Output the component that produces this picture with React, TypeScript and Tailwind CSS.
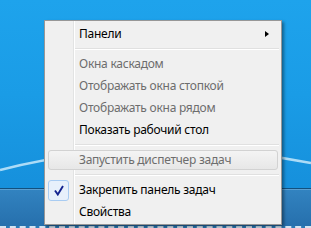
import React from "react";

type Item =
  | { kind: "item"; label: string; disabled?: boolean; hot?: boolean; checked?: boolean; submenu?: boolean }
  | { kind: "sep" };

const ITEMS: Item[] = [
  { kind: "item", label: "Панели", submenu: true },
  { kind: "sep" },
  { kind: "item", label: "Окна каскадом", disabled: true },
  { kind: "item", label: "Отображать окна стопкой", disabled: true },
  { kind: "item", label: "Отображать окна рядом", disabled: true },
  { kind: "item", label: "Показать рабочий стол" },
  { kind: "sep" },
  { kind: "item", label: "Запустить диспетчер задач", disabled: true, hot: true },
  { kind: "sep" },
  { kind: "item", label: "Закрепить панель задач", checked: true },
  { kind: "item", label: "Свойства" },
];

function Check() {
  return (
    <svg width="10" height="11" viewBox="0 0 10 11" className="block">
      <path d="M1 5.5 L3.8 9.5 L9 1" fill="none" stroke="#14238f" strokeWidth="1.9" strokeLinejoin="miter" />
    </svg>
  );
}

function MenuRow({ item }: { item: Item }) {
  if (item.kind === "sep") {
    return (
      <div className="flex h-[8px] items-center pl-[30px] pr-[2px]">
        <div className="w-full border-t border-b border-t-[#e0e0e0] border-b-white" />
      </div>
    );
  }
  return (
    <div className="relative flex h-[22px] items-center">
      {item.hot && (
        <div className="absolute inset-y-[1px] left-[3px] right-[3px] rounded-[3px] border border-[#d2d2d2] bg-gradient-to-b from-[#f4f4f4] to-[#e7e7e7]" />
      )}
      <div className="relative flex w-[34px] shrink-0 justify-start pl-[3px]">
        {item.checked && (
          <div className="flex h-[21px] w-[21px] items-center justify-center rounded-[3px] border border-[#a9ccf2] bg-[#e7f0fb]">
            <Check />
          </div>
        )}
      </div>
      <span
        className={
          "relative flex-1 whitespace-nowrap tracking-[-0.25px] " + (item.disabled ? "text-[#6d6d6d]" : "text-black")
        }
      >
        {item.label}
      </span>
      {item.submenu && (
        <div className="relative mr-[12px] h-0 w-0 border-y-[3.5px] border-l-[4px] border-y-transparent border-l-black" />
      )}
    </div>
  );
}

export default function App() {
  return (
    <div
      className="relative h-[228px] w-[311px] overflow-hidden"
      style={{ fontFamily: '"Noto Sans", "Open Sans", sans-serif' }}
    >
      <div className="flex h-full flex-col">
        <div className="relative h-[188px] bg-gradient-to-b from-[#1ea3ec] via-[#1a9ce6] to-[#1690dc]">
          {/* wallpaper light streak */}
          <svg width="311" height="188" className="absolute inset-0">
            <path d="M0 170 Q150 132 311 163" fill="none" stroke="#d2eefc" strokeWidth="2.5" opacity="0.8" />
          </svg>
        </div>
        <div className="flex-1 border-t border-t-[#12507e] bg-gradient-to-b from-[#3283c0] to-[#2670ad]">
          <div className="h-[1px] bg-[#5a9fd2]" />
        </div>
        <div className="h-[2px] border-b-2 border-dashed border-b-white/80 bg-[#2a7ab8]" />
      </div>

      {/* context menu */}
      <div className="absolute left-[44px] top-[20px] w-[238px] border border-[#979797] bg-[#f0f0f0] pt-[2px] pb-[1px] text-[12px] shadow-[2px_2px_3px_rgba(0,0,0,0.4)]">
        <div className="absolute inset-y-0 left-[28px] w-[2px] border-l border-r border-l-[#e2e3e3] border-r-white" />
        {ITEMS.map((item, i) => (
          <MenuRow key={i} item={item} />
        ))}
      </div>
    </div>
  );
}
